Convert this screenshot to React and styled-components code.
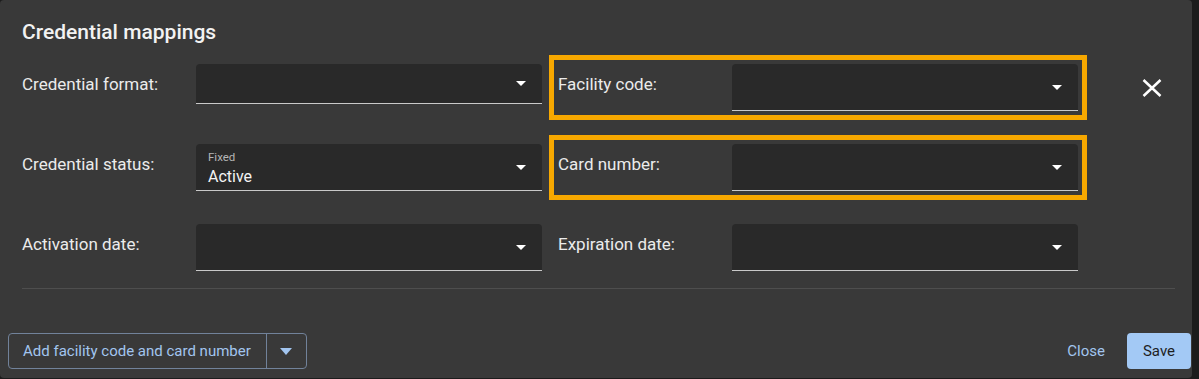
import React from "react";
import styled, { createGlobalStyle } from "styled-components";

const GlobalStyle = createGlobalStyle`
    body {
        margin: 0;
        background: #1c1c1c;
        font-family: Roboto, "Noto Sans", sans-serif;
    }
`;

const rows = [
    [
        { label: "Credential format:", height: 40 },
        { label: "Facility code:", highlighted: true },
    ],
    [
        { label: "Credential status:", caption: "Fixed", value: "Active" },
        { label: "Card number:", highlighted: true },
    ],
    [{ label: "Activation date:" }, { label: "Expiration date:" }],
];

const Field = ({ label, caption, value, height, highlighted }) => (
    <FieldWrap highlighted={highlighted}>
        <Label>{label}</Label>
        <Select height={height}>
            <SelectText>
                {caption && <Caption>{caption}</Caption>}
                {value && <Value>{value}</Value>}
            </SelectText>
            <Caret />
        </Select>
    </FieldWrap>
);

export default () => (
    <>
        <GlobalStyle />
        <Panel>
            <Body>
                <Title>Credential mappings</Title>
                <Rows>
                    {rows.map((row, i) => (
                        <Row key={i}>
                            {row.map((field) => (
                                <Field key={field.label} {...field} />
                            ))}
                            {i === 0 && (
                                <RemoveButton aria-label="Remove">
                                    <svg width="20" height="18" viewBox="0 0 20 18">
                                        <path
                                            d="M1.5 1 L18.5 17 M18.5 1 L1.5 17"
                                            stroke="#ffffff"
                                            strokeWidth="2.5"
                                            fill="none"
                                        />
                                    </svg>
                                </RemoveButton>
                            )}
                        </Row>
                    ))}
                </Rows>
                <Divider />
            </Body>
            <Footer>
                <SplitButton>
                    <SplitMain>Add facility code and card number</SplitMain>
                    <SplitToggle>
                        <BlueCaret />
                    </SplitToggle>
                </SplitButton>
                <Actions>
                    <TextButton>Close</TextButton>
                    <SaveButton>Save</SaveButton>
                </Actions>
            </Footer>
        </Panel>
    </>
);

const Panel = styled.div`
    width: 1192px;
    height: 378px;
    box-sizing: border-box;
    background: #393939;
    border-radius: 4px;
    display: flex;
    flex-direction: column;
    color: #ececec;
`;

const Body = styled.div`
    padding: 18px 17px 0 22px;
`;

const Title = styled.h2`
    margin: 0 0 18px;
    font-size: 21px;
    line-height: 28px;
    font-weight: 500;
    color: #f2f2f2;
`;

const Rows = styled.div`
    display: flex;
    flex-direction: column;
    gap: 33px;
`;

const Row = styled.div`
    display: flex;
    align-items: flex-start;
    gap: 16px;
    min-height: 47px;
`;

const FieldWrap = styled.div`
    display: flex;
    align-items: flex-start;
    outline: ${({ highlighted }) =>
        highlighted ? "5px solid #f7a800" : "none"};
    outline-offset: 4px;
`;

const Label = styled.div`
    width: 174px;
    font-size: 17px;
    line-height: 40px;
    color: #ebebeb;
`;

const Select = styled.div`
    width: 346px;
    height: ${({ height }) => height || 47}px;
    box-sizing: border-box;
    background: #292929;
    border-bottom: 1px solid #c9c9c9;
    border-radius: 4px 4px 0 0;
    display: flex;
    align-items: center;
    padding: 0 16px 0 12px;
`;

const SelectText = styled.div`
    flex: 1;
    display: flex;
    flex-direction: column;
    padding-top: 4px;
`;

const Caption = styled.span`
    font-size: 11.5px;
    line-height: 14px;
    color: #b5b5b5;
`;

const Value = styled.span`
    margin-top: 2px;
    font-size: 16px;
    line-height: 22px;
    color: #f4f4f4;
`;

const Caret = styled.span`
    width: 0;
    height: 0;
    border-left: 5px solid transparent;
    border-right: 5px solid transparent;
    border-top: 5px solid #ffffff;
`;

const RemoveButton = styled.button`
    align-self: center;
    margin-left: 38px;
    width: 40px;
    height: 40px;
    padding: 0;
    border: none;
    background: none;
    display: flex;
    align-items: center;
    justify-content: center;
    cursor: pointer;
`;

const Divider = styled.hr`
    margin: 17px 0 0;
    border: none;
    border-top: 1px solid #4e4e4e;
`;

const Footer = styled.div`
    margin-top: 44px;
    padding: 0 1px 9px 8px;
    display: flex;
    align-items: center;
    justify-content: space-between;
`;

const SplitButton = styled.div`
    display: flex;
    height: 36px;
    box-sizing: border-box;
    border: 1px solid #71829a;
    border-radius: 4px;
`;

const SplitMain = styled.button`
    padding: 0 15px 0 14px;
    border: none;
    background: none;
    font-family: inherit;
    font-size: 15px;
    color: #a2c5ef;
    cursor: pointer;
`;

const SplitToggle = styled.button`
    width: 40px;
    border: none;
    border-left: 1px solid #71829a;
    background: none;
    display: flex;
    align-items: center;
    justify-content: center;
    cursor: pointer;
`;

const BlueCaret = styled.span`
    width: 0;
    height: 0;
    border-left: 6px solid transparent;
    border-right: 6px solid transparent;
    border-top: 7px solid #a2c5ef;
`;

const Actions = styled.div`
    display: flex;
    align-items: center;
    gap: 14px;
`;

const TextButton = styled.button`
    height: 36px;
    padding: 0 8px;
    border: none;
    background: none;
    font-family: inherit;
    font-size: 15px;
    color: #a2c5ef;
    cursor: pointer;
`;

const SaveButton = styled.button`
    height: 36px;
    width: 64px;
    border: none;
    border-radius: 4px;
    background: #a3c9f5;
    font-family: inherit;
    font-size: 15px;
    color: #1e1e1e;
    cursor: pointer;
`;
